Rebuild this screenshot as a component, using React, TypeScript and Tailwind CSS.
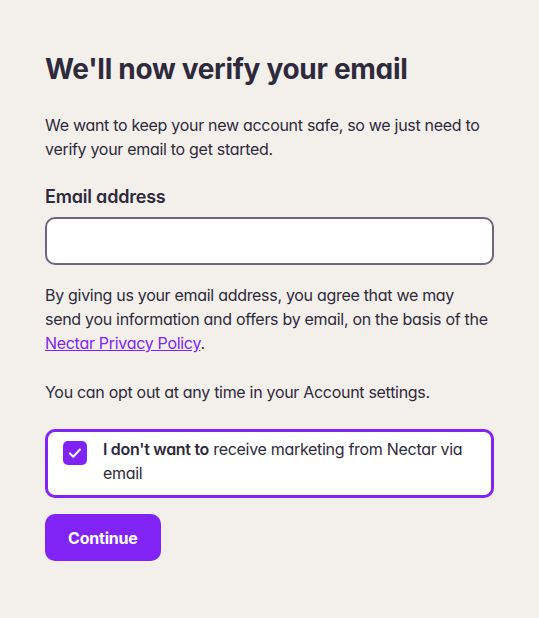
import React, { useState } from 'react';

const App: React.FC = () => {
  const [email, setEmail] = useState('');
  const [optOut, setOptOut] = useState(true);

  return (
    <div
      className="min-h-screen bg-[#f3f0ec] text-[#2e2a3b] px-[45px] pt-[51px] pb-10 [font-feature-settings:'cv11']"
      style={{ fontFamily: 'Inter, "Noto Sans", sans-serif' }}
    >
      <h1 className="text-[28px] leading-[36px] font-bold tracking-[-0.3px]">We'll now verify your email</h1>

      <p className="mt-[26px] text-[16px] leading-[24px] tracking-[-0.3px]">
        We want to keep your new account safe, so we just need to verify your email to get started.
      </p>

      <label htmlFor="email" className="block mt-[23px] text-[18px] leading-[26px] font-semibold tracking-[-0.2px]">
        Email address
      </label>
      <input
        id="email"
        type="email"
        value={email}
        onChange={(e) => setEmail(e.target.value)}
        className="mt-[7px] block w-full h-[48px] bg-white border-2 border-[#6f6682] rounded-[10px] px-3 focus:outline-none"
      />

      <p className="mt-[18px] text-[16px] leading-[24px] tracking-[-0.3px]">
        By giving us your email address, you agree that we may send you information and offers by email, on the basis of the{' '}
        <a href="#" className="text-[#8223f5] underline">Nectar Privacy Policy</a>.
      </p>

      <p className="mt-[25px] text-[16px] leading-[24px] tracking-[-0.3px]">
        You can opt out at any time in your Account settings.
      </p>

      <label className="mt-[25px] flex items-start gap-[16px] bg-white border-[3px] border-[#8223f5] rounded-[10px] pl-[15px] pr-4 pt-[5px] pb-[10px] cursor-pointer">
        <input
          type="checkbox"
          checked={optOut}
          onChange={() => setOptOut(!optOut)}
          className="sr-only"
        />
        <span className="mt-[4px] w-6 h-6 shrink-0 rounded-[5px] bg-[#8223f5] flex items-center justify-center">
          {optOut && (
            <svg width="14" height="14" viewBox="0 0 14 14" fill="none">
              <path d="M2 7.5l3.2 3.2L12 3.5" stroke="white" strokeWidth="2" strokeLinecap="round" strokeLinejoin="round" />
            </svg>
          )}
        </span>
        <span className="text-[16px] leading-[24px] tracking-[-0.3px]">
          <strong className="font-semibold">I don't want to</strong> receive marketing from Nectar via email
        </span>
      </label>

      <button
        type="button"
        className="mt-[16px] h-[47px] px-[23px] bg-[#8223f5] text-white text-[16px] font-bold tracking-[-0.2px] rounded-[10px]"
      >
        Continue
      </button>
    </div>
  );
};

export default App;
